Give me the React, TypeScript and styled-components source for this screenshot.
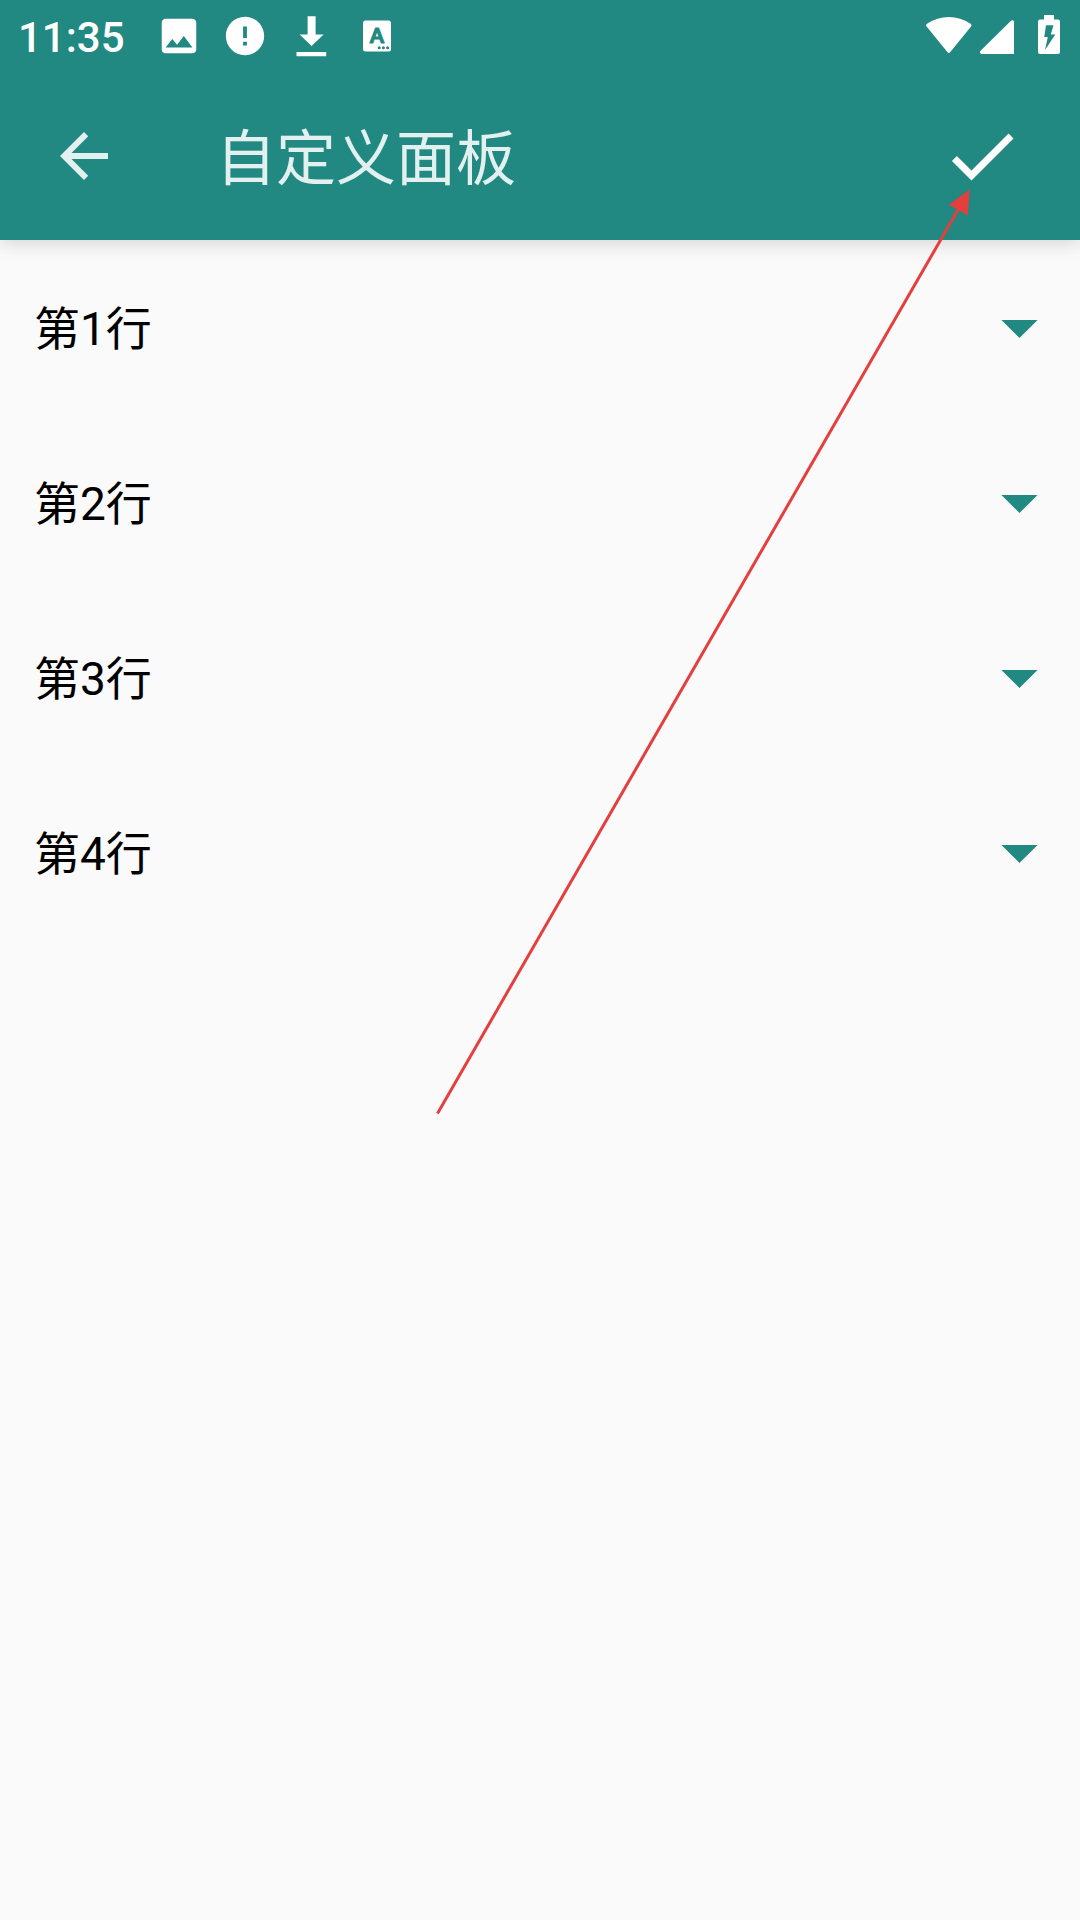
import React from "react";
import styled, { createGlobalStyle } from "styled-components";

const TEAL = "#218981";
const RED = "#e53e3e";

const GlobalStyle = createGlobalStyle`
  body {
    margin: 0;
    background: #fafafa;
  }
`;

const Screen = styled.div`
  position: relative;
  display: flex;
  flex-direction: column;
  width: 1080px;
  height: 1920px;
  overflow: hidden;
  background: #fafafa;
  font-family: Roboto, "Noto Sans CJK SC", sans-serif;
`;

const Header = styled.header`
  display: flex;
  flex-direction: column;
  background: ${TEAL};
  box-shadow: 0 3px 18px rgba(0, 0, 0, 0.16);
`;

const StatusBar = styled.div`
  display: flex;
  align-items: center;
  justify-content: space-between;
  height: 72px;
  padding: 0 20px 0 18px;
  box-sizing: border-box;
  color: #fff;
`;

const StatusGroup = styled.div<{ $gap: number }>`
  display: flex;
  align-items: center;
  gap: ${(p) => p.$gap}px;
`;

const Clock = styled.span`
  width: 118px;
  font-size: 42px;
  line-height: 72px;
  font-weight: 500;
  padding-top: 4px;
`;

const Glyph = styled.svg`
  display: block;
  flex: none;
  fill: currentColor;
`;

const Toolbar = styled.div`
  display: flex;
  align-items: center;
  height: 168px;
  padding: 0 56px 0 48px;
  color: rgba(255, 255, 255, 0.87);
`;

const IconButton = styled.button<{ $color?: string }>`
  display: flex;
  padding: 0;
  border: 0;
  background: none;
  color: ${(p) => p.$color ?? "inherit"};
`;

const Title = styled.h1`
  flex: 1;
  margin: 0 0 0 96px;
  padding-top: 8px;
  font-size: 60px;
  line-height: 84px;
  font-weight: 400;
`;

const RowList = styled.main`
  display: flex;
  flex-direction: column;
  padding-top: 1px;
`;

const Row = styled.div`
  display: flex;
  align-items: center;
  justify-content: space-between;
  height: 175px;
  padding: 0 42px 0 34px;
  color: #000;
  font-size: 46px;
  line-height: 60px;
`;

const RowLabel = styled.span`
  padding-top: 1px;
`;

const Caret = styled(Glyph)`
  color: ${TEAL};
`;

const Pointer = styled.svg`
  position: absolute;
  left: 0;
  top: 0;
  pointer-events: none;
`;

const rows = ["第1行", "第2行", "第3行", "第4行"];

export default function App() {
  return (
    <>
      <GlobalStyle />
      <Screen>
        <Header>
          <StatusBar>
            <StatusGroup $gap={20}>
              <Clock>11:35</Clock>
              <Glyph width="46" height="46" viewBox="0 0 24 24">
                <path d="M21 19V5c0-1.1-.9-2-2-2H5c-1.1 0-2 .9-2 2v14c0 1.1.9 2 2 2h14c1.1 0 2-.9 2-2zM8.5 13.5l2.5 3.01L14.5 12l4.5 6H5l3.5-4.5z" />
              </Glyph>
              <Glyph width="46" height="46" viewBox="0 0 24 24">
                <path d="M12 2C6.48 2 2 6.48 2 12s4.48 10 10 10 10-4.48 10-10S17.52 2 12 2zm1 15h-2v-2h2v2zm0-4h-2V7h2v6z" />
              </Glyph>
              <Glyph width="46" height="46" viewBox="0 0 46 46">
                <path d="M19.6 3.2h8v18.3h8L23.6 33 11.6 21.5h8zM8.5 39h29.7v4.2H8.5z" />
              </Glyph>
              <Glyph width="46" height="46" viewBox="0 0 46 46">
                <rect x="9" y="7.5" width="28" height="31" rx="2.5" />
                <text
                  x="23"
                  y="29.6"
                  fontFamily="Lato, sans-serif"
                  fontWeight="700"
                  fontSize="20"
                  textAnchor="middle"
                  fill={TEAL}
                  stroke={TEAL}
                  strokeWidth="1.2"
                  strokeLinejoin="round"
                >
                  A
                </text>
                <g fill={TEAL}>
                  <circle cx="25.2" cy="34.7" r="1.5" />
                  <circle cx="29.4" cy="34.7" r="1.5" />
                  <circle cx="33.6" cy="34.7" r="1.5" />
                </g>
              </Glyph>
            </StatusGroup>
            <StatusGroup $gap={0}>
              <Glyph width="54" height="72" viewBox="0 0 54 72">
                <path d="M.6 26.5Q-.6 25 1 23.8C8 19.3 15 17 22.8 17s14.8 2.3 21.8 6.8q1.6 1.2.4 2.7L24.3 52q-1.5 1.8-3 0z" />
              </Glyph>
              <Glyph width="58" height="72" viewBox="0 0 58 72">
                <path d="M34 21.5V54H1.5Q-1 53.2.3 51L31 20.7q2-1.4 3 .8z" />
              </Glyph>
              <Glyph width="22" height="72" viewBox="0 0 22 72">
                <path
                  fillRule="evenodd"
                  d="M6 15h10v4.5h4q2 0 2 2V52q0 2-2 2H2q-2 0-2-2V21.5q0-2 2-2h4zM8 25.2L6.2 37H9.8L7 50L17.3 34.5H12.8L15.5 25.2z"
                />
              </Glyph>
            </StatusGroup>
          </StatusBar>
          <Toolbar>
            <IconButton aria-label="返回">
              <Glyph width="72" height="72" viewBox="0 0 24 24">
                <path d="M20 11H7.83l5.59-5.59L12 4l-8 8 8 8 1.41-1.41L7.83 13H20v-2z" />
              </Glyph>
            </IconButton>
            <Title>自定义面板</Title>
            <IconButton aria-label="完成" $color="#fff">
              <Glyph width="84" height="84" viewBox="0 0 24 24">
                <path d="M9 16.17L4.83 12l-1.42 1.41L9 19 21 7l-1.41-1.41z" />
              </Glyph>
            </IconButton>
          </Toolbar>
        </Header>
        <RowList>
          {rows.map((label) => (
            <Row key={label}>
              <RowLabel>{label}</RowLabel>
              <Caret width="37" height="18" viewBox="0 0 37 18">
                <path d="M.4 0h36.2L18.5 18z" />
              </Caret>
            </Row>
          ))}
        </RowList>
        <Pointer width="1080" height="1200" viewBox="0 0 1080 1200">
          <path d="M437.5 1113.5L959 208" stroke={RED} strokeWidth="3" />
          <path d="M969.7 189.3L949 204.7L967.8 215.3z" fill={RED} />
        </Pointer>
      </Screen>
    </>
  );
}
